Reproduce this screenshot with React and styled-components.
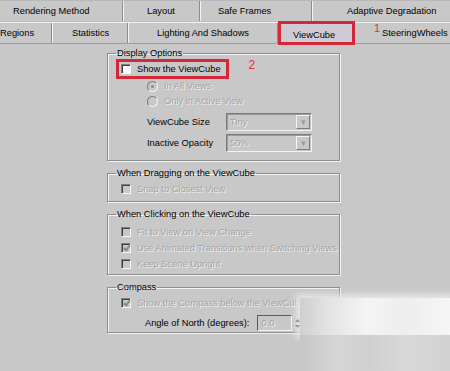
import React from 'react'
import styled, { createGlobalStyle } from 'styled-components'

const GlobalStyle = createGlobalStyle`
  body {
    margin: 0;
    background: #c8c8c8;
    font-family: 'Liberation Sans', Arial, sans-serif;
    font-size: 9.3px;
    color: #000;
  }
`

const topTabs = [
  { label: 'Rendering Method', w: 123, pad: 13 },
  { label: 'Layout', w: 77, pad: 24 },
  { label: 'Safe Frames', w: 112, pad: 18 },
  { label: 'Adaptive Degradation', w: 138, pad: 35 },
]

const bottomTabs = [
  { label: 'Regions', w: 52, pad: 0 },
  { label: 'Statistics', w: 76, pad: 20 },
  { label: 'Lighting And Shadows', w: 150, pad: 29 },
  { label: 'ViewCube', w: 77, pad: 15, active: true },
  { label: 'SteeringWheels', w: 95, pad: 27, mark: '1' },
]

const App = () => {
  return (
    <Frame>
      <GlobalStyle />
      <TabRow>
        {topTabs.map((t) => (
          <Tab key={t.label} $w={t.w} $pad={t.pad}>{t.label}</Tab>
        ))}
      </TabRow>
      <TabRow $lower>
        {bottomTabs.map((t) => (
          <Tab key={t.label} $w={t.w} $pad={t.pad} $active={t.active}>
            {t.mark && <Mark $tab>{t.mark}</Mark>}
            {t.label}
          </Tab>
        ))}
      </TabRow>

      <Panel>
        <Group $h={113}>
          <Legend>Display Options</Legend>
          <MarkRow>
            <Highlight>
              <CheckRow>
                <Check />
                <span>Show the ViewCube</span>
              </CheckRow>
            </Highlight>
            <Mark>2</Mark>
          </MarkRow>
          <Indent>
            <CheckRow $h={14}>
              <Radio $on />
              <Dim>In All Views</Dim>
            </CheckRow>
            <CheckRow $h={16}>
              <Radio />
              <Dim>Only in Active View</Dim>
            </CheckRow>
            <Fields>
              <FieldRow>
                <FieldLabel>ViewCube Size</FieldLabel>
                <Combo>
                  <Dim>Tiny</Dim>
                  <ComboButton>▾</ComboButton>
                </Combo>
              </FieldRow>
              <FieldRow>
                <FieldLabel>Inactive Opacity</FieldLabel>
                <Combo>
                  <Dim>50%</Dim>
                  <ComboButton>▾</ComboButton>
                </Combo>
              </FieldRow>
            </Fields>
          </Indent>
        </Group>

        <Group $h={34}>
          <Legend>When Dragging on the ViewCube</Legend>
          <Rows $top={2}>
            <CheckRow $h={16}>
              <Check $off />
              <Dim>Snap to Closest View</Dim>
            </CheckRow>
          </Rows>
        </Group>

        <Group $h={66}>
          <Legend>When Clicking on the ViewCube</Legend>
          <Rows $top={4}>
            <CheckRow $h={16}>
              <Check $off />
              <Dim>Fit to View on View Change</Dim>
            </CheckRow>
            <CheckRow $h={16}>
              <Check $off $on />
              <Dim>Use Animated Transitions when Switching Views</Dim>
            </CheckRow>
            <CheckRow $h={16}>
              <Check $off />
              <Dim>Keep Scene Upright</Dim>
            </CheckRow>
          </Rows>
        </Group>

        <Group $h={51}>
          <Legend>Compass</Legend>
          <Rows $top={2}>
            <CheckRow $h={16}>
              <Check $off $on />
              <Dim>Show the Compass below the ViewCube</Dim>
            </CheckRow>
            <SpinRow>
              <span>Angle of North (degrees):</span>
              <SpinField><Dim>0.0</Dim></SpinField>
              <SpinArrows>
                <Arrow $up />
                <Arrow />
              </SpinArrows>
            </SpinRow>
          </Rows>
        </Group>
      </Panel>
      <Watermark>
        <Smudge $band="top" />
        <Smudge $band="bottom" />
      </Watermark>
    </Frame>
  )
}

export default App

const Frame = styled.div`
  position: relative;
  width: 450px;
  height: 371px;
  overflow: hidden;
  background: #c8c8c8;
`
const TabRow = styled.div`
  display: flex;
  height: 20px;
  border-top: 1px solid ${(p) => (p.$lower ? '#f0f0f0' : '#b8b8b8')};
  border-bottom: 1px solid ${(p) => (p.$lower ? '#9c9c9c' : '#c0c0c0')};
  white-space: nowrap;
`
const Tab = styled.div`
  position: relative;
  flex: none;
  box-sizing: border-box;
  width: ${(p) => p.$w}px;
  padding-left: ${(p) => p.$pad}px;
  line-height: 20px;
  border-right: 1px solid #8c8c8c;
  box-shadow: 1px 0 0 #f4f4f4;
  ${(p) => p.$active && `
    margin-top: -2px;
    height: 24px;
    line-height: 22px;
    background: #cfcbd4;
    border: 3px solid #d3283a;
    padding-left: 12px;
    box-shadow: none;
    z-index: 1;
  `}
  &:last-child {
    border-right: none;
    box-shadow: none;
  }
`
const Mark = styled.span`
  color: #e0303c;
  font-size: 12px;
  ${(p) => p.$tab
    ? `position: absolute; left: 19px; top: -5px; font-size: 11px;`
    : `margin-left: 20px; margin-top: -1px;`}
`
const Panel = styled.div`
  display: flex;
  flex-direction: column;
  gap: 7px;
  width: 233px;
  margin-left: 107px;
  padding-top: 4px;
`
const Group = styled.fieldset`
  margin: 0;
  padding: 0 0 0 13px;
  height: ${(p) => p.$h}px;
  box-sizing: border-box;
  border: 1px solid #8e8e8e;
  box-shadow: inset 1px 1px 0 #f2f2f2, 1px 1px 0 #f2f2f2;
  display: flex;
  flex-direction: column;
  min-width: 0;
`
const Legend = styled.legend`
  padding: 0 1px;
  margin-left: -5px;
  line-height: 11px;
`
const Rows = styled.div`
  display: flex;
  flex-direction: column;
  margin-top: ${(p) => p.$top}px;
`
const MarkRow = styled.div`
  display: flex;
  align-items: flex-start;
`
const Highlight = styled.div`
  border: 3px solid #d3283a;
  padding: 0 5px 0 2px;
  margin-left: -5px;
`
const CheckRow = styled.div`
  display: flex;
  align-items: center;
  gap: 6px;
  height: ${(p) => p.$h || 14}px;
  white-space: nowrap;
`
const Check = styled.span`
  position: relative;
  flex: none;
  width: 8px;
  height: 8px;
  background: ${(p) => (p.$off ? '#c8c8c8' : '#fbfbfb')};
  border-top: 1px solid #808080;
  border-left: 1px solid #808080;
  border-bottom: 1px solid #f6f6f6;
  border-right: 1px solid #f6f6f6;
  box-shadow: inset 1px 1px 0 #404040;
  ${(p) => p.$on && `
    &::after {
      content: '';
      position: absolute;
      left: 3px;
      top: 0px;
      width: 2px;
      height: 5px;
      border: solid #8a8a8a;
      border-width: 0 2px 2px 0;
      transform: rotate(40deg);
    }
  `}
`
const Radio = styled.span`
  position: relative;
  flex: none;
  width: 9px;
  height: 9px;
  border-radius: 50%;
  background: #c8c8c8;
  border: 1px solid;
  border-color: #7a7a7a #f2f2f2 #f2f2f2 #7a7a7a;
  ${(p) => p.$on && `
    &::after {
      content: '';
      position: absolute;
      left: 3px;
      top: 3px;
      width: 3px;
      height: 3px;
      border-radius: 50%;
      background: #8a8a8a;
    }
  `}
`
const Dim = styled.span`
  color: #a4a4a4;
  text-shadow: 1px 1px 0 #f0f0f0;
`
const Indent = styled.div`
  display: flex;
  flex-direction: column;
  padding-left: 26px;
`
const Fields = styled.div`
  display: flex;
  flex-direction: column;
  margin-top: 2px;
`
const FieldRow = styled.div`
  display: flex;
  align-items: center;
  height: 21px;
`
const FieldLabel = styled.span`
  width: 79px;
  flex: none;
`
const Combo = styled.div`
  display: flex;
  align-items: center;
  justify-content: space-between;
  box-sizing: border-box;
  width: 86px;
  height: 18px;
  padding-left: 3px;
  border: 1px solid;
  border-color: #7c7c7c #f2f2f2 #f2f2f2 #7c7c7c;
  box-shadow: inset 1px 1px 0 #9a9a9a;
`
const ComboButton = styled.span`
  width: 14px;
  height: 14px;
  margin-right: 1px;
  box-sizing: border-box;
  border: 1px solid;
  border-color: #f4f4f4 #7c7c7c #7c7c7c #f4f4f4;
  color: #9a9a9a;
  font-size: 9px;
  line-height: 12px;
  text-align: center;
`
const SpinRow = styled.div`
  display: flex;
  align-items: center;
  height: 20px;
  margin-top: 2px;
  padding-left: 24px;
  white-space: nowrap;
`
const SpinField = styled.span`
  box-sizing: border-box;
  width: 35px;
  height: 16px;
  margin-left: 8px;
  padding-left: 3px;
  line-height: 14px;
  border: 1px solid;
  border-color: #5a5a5a #f2f2f2 #f2f2f2 #5a5a5a;
`
const SpinArrows = styled.span`
  display: flex;
  flex-direction: column;
  gap: 3px;
  margin-left: 3px;
`
const Arrow = styled.span`
  width: 0;
  height: 0;
  border-left: 3px solid transparent;
  border-right: 3px solid transparent;
  ${(p) => (p.$up
    ? 'border-bottom: 3px solid #3a3a3a;'
    : 'border-top: 3px solid #3a3a3a;')}
`
const Watermark = styled.div`
  position: absolute;
  left: 300px;
  top: 298px;
  width: 150px;
  height: 73px;
  display: flex;
  flex-direction: column;
  z-index: 2;
`
const Smudge = styled.div`
  flex: 1;
  ${(p) => (p.$band === 'top'
    ? `
      background: linear-gradient(90deg, #cfcfcf 0%, #e4e4e4 20%, #f4f4f4 45%, #ededed 70%, #f6f6f6 100%);
      box-shadow: 0 0 6px 4px rgba(236, 236, 236, 0.8);
    `
    : `
      background: linear-gradient(90deg, #c6c6c6 0%, #d6d6d6 25%, #cfcfcf 45%, #d8d8d8 70%, #d2d2d2 100%);
    `)}
`
